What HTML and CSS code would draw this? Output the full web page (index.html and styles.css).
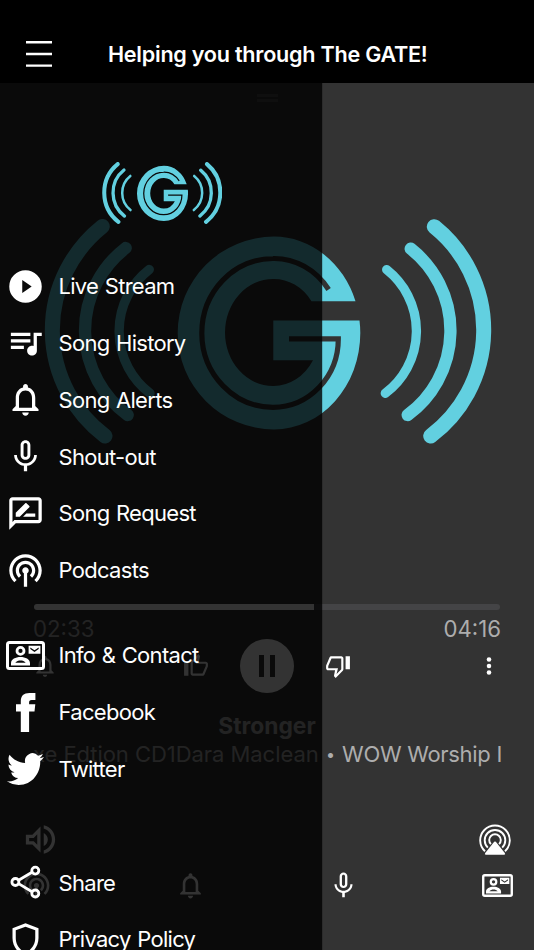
FILE: index.html
```html
<!DOCTYPE html>
<html lang="en">
<head>
<meta charset="utf-8">
<title>The GATE</title>
<link rel="stylesheet" href="styles.css">
</head>
<body>
<svg class="defs" aria-hidden="true">
  <symbol id="bell" viewBox="0 0 24 24"><path d="M12 22c1.1 0 2-.9 2-2h-4c0 1.1.9 2 2 2zm6-6v-5c0-3.07-1.63-5.64-4.5-6.32V4c0-.83-.67-1.5-1.5-1.5s-1.5.67-1.5 1.5v.68C7.64 5.36 6 7.92 6 11v5l-2 2v1h16v-1l-2-2zm-2 1H8v-6c0-2.48 1.51-4.5 4-4.5s4 2.02 4 4.5v6z"/></symbol>
  <symbol id="mic" viewBox="0 0 24 24"><path d="M12 14c1.66 0 2.99-1.34 2.99-3L15 5c0-1.66-1.34-3-3-3S9 3.34 9 5v6c0 1.66 1.34 3 3 3zm-1.2-9.1c0-.66.54-1.2 1.2-1.2.66 0 1.2.54 1.2 1.2l-.01 6.2c0 .66-.53 1.2-1.19 1.2-.66 0-1.2-.54-1.2-1.2V4.9zm6.5 6.1c0 3-2.54 5.1-5.3 5.1S6.7 14 6.7 11H5c0 3.41 2.72 6.23 6 6.72V21h2v-3.28c3.28-.48 6-3.3 6-6.72h-1.7z"/></symbol>
  <symbol id="podcast" viewBox="0 0 24 24"><path d="M14 12c0 .74-.4 1.38-1 1.72V22h-2v-8.28c-.6-.35-1-.98-1-1.72 0-1.1.9-2 2-2s2 .9 2 2zm-2-6c-3.31 0-6 2.69-6 6 0 1.74.75 3.31 1.94 4.4l1.42-1.42C8.53 14.25 8 13.19 8 12c0-2.21 1.79-4 4-4s4 1.79 4 4c0 1.19-.53 2.25-1.36 2.98l1.42 1.42C17.25 15.31 18 13.74 18 12c0-3.31-2.69-6-6-6zm0-4C6.48 2 2 6.48 2 12c0 2.85 1.2 5.41 3.11 7.24l1.42-1.42C4.98 16.36 4 14.29 4 12c0-4.41 3.59-8 8-8s8 3.59 8 8c0 2.29-.98 4.36-2.53 5.82l1.42 1.42C20.8 17.41 22 14.85 22 12c0-5.52-4.48-10-10-10z"/></symbol>
  <symbol id="contact" viewBox="0 0 39 29"><rect x="1.5" y="1.5" width="36" height="26" rx="2" fill="none" stroke="currentColor" stroke-width="3"/><circle cx="14.5" cy="9.9" r="3.5" fill="none" stroke="currentColor" stroke-width="2.8"/><path fill-rule="evenodd" d="M5 24.6v-2.4c0-4 4.6-6.2 9.5-6.2s9.5 2.2 9.5 6.2v2.4zM9.3 21.7h10.4c-1.2-1.7-3.2-2.3-5.2-2.3s-4 .6-5.2 2.3z"/><path fill-rule="evenodd" d="M22.6 4.7h11.8v8h-11.8zM24.3 6.5v1.6l4.2 2.9 4.2-2.9V6.5l-4.2 2.8z"/></symbol>
  <symbol id="thumb" viewBox="0 0 24 24"><path d="M15 3H6c-.83 0-1.54.5-1.84 1.22l-3.02 7.05c-.09.23-.14.47-.14.73v2c0 1.1.9 2 2 2h6.31l-.95 4.57-.03.32c0 .41.17.79.44 1.06L9.83 23l6.59-6.59c.36-.36.58-.86.58-1.41V5c0-1.1-.9-2-2-2zm0 12l-4.34 4.34L12 14H3v-2l3-7h9v10zm4-12h4v12h-4z"/></symbol>
  <symbol id="logo" viewBox="44 219 448 225" preserveAspectRatio="none">
    <g fill="none" stroke="#62d0e0" stroke-linecap="round">
      <path stroke-width="15" d="M434.3 226.7A132.6 132.6 0 0 1 430.7 436M102.3 226.5A132.6 132.6 0 0 0 105 436"/>
      <path stroke-width="12.3" d="M410.7 248.7A104.5 104.5 0 0 1 407.7 415M125.7 248A104.5 104.5 0 0 0 127.7 415"/>
      <path stroke-width="9.3" d="M386.7 269.7A78 78 0 0 1 385.3 393.3M149.3 269.5A78 78 0 0 0 150 393.3"/>
    </g>
    <g class="letter">
      <path fill="#62d0e0" d="M355.5 301.3A86.3 96.4 0 0 0 274 236.6A96.3 96.4 0 0 0 177.7 333A96.3 96.4 0 0 0 274 429.4A86.3 96.4 0 0 0 360.3 333Q360.3 327 359.5 320.5H273.3V360.3H313A46 53.5 0 0 1 273 386A48 53.5 0 0 1 225 332.5A48 53.5 0 0 1 273 279A46 53.5 0 0 1 311.5 301.3Z"/>
      <path class="groove" fill="none" stroke="currentColor" d="M328.6 289.5A67 75 0 0 0 273 258.5A71.2 74.8 0 0 0 201.8 333.3A71.2 74.4 0 0 0 273 407.3A65.3 68.4 0 0 0 338.3 338.9H289"/>
    </g>
  </symbol>
</svg>
<header class="topbar">
  <svg class="burger" viewBox="0 0 26 28"><path d="M0 2.3h26M0 14h26M0 25.6h26" stroke="#fff" stroke-width="2.4"/></svg>
  <h1>Helping you through The GATE!</h1>
</header>
<main class="player">
  <div class="handle"></div>
  <svg class="art"><use href="#logo"/></svg>
  <div class="progress"><div class="progress-fill"></div></div>
  <div class="times"><span>02:33</span><span>04:16</span></div>
  <div class="controls">
    <svg class="sm"><use href="#bell"/></svg>
    <div class="center-controls">
      <svg class="sm flip"><use href="#thumb"/></svg>
      <div class="pause"><i></i><i></i></div>
      <svg class="sm"><use href="#thumb"/></svg>
    </div>
    <svg class="sm" viewBox="0 0 24 24"><circle cx="12" cy="6" r="2.1"/><circle cx="12" cy="12" r="2.1"/><circle cx="12" cy="18" r="2.1"/></svg>
  </div>
  <div class="track">Stronger</div>
  <div class="ticker"><span class="artist">xe Edtion CD1Dara Maclean</span><span class="dot">•</span><span class="album">WOW Worship I</span></div>
  <div class="audio">
    <svg class="lg" viewBox="0 0 24 24"><path d="M3 9v6h4l5 5V4L7 9H3zm7-.17v6.34L7.83 13H5v-2h2.83L10 8.83zM16.5 12c0-1.77-1.02-3.29-2.5-4.03v8.05c1.48-.73 2.5-2.25 2.5-4.02zM14 3.23v2.06c2.89.86 5 3.54 5 6.71s-2.11 5.85-5 6.71v2.06c4.01-.91 7-4.49 7-8.77 0-4.28-2.99-7.86-7-8.77z"/></svg>
    <svg class="airplay" viewBox="0 0 32 32"><g fill="none" stroke="#fff" stroke-width="1.9"><path d="M6 27.2A14.8 14.8 0 1 1 26 27.2"/><path d="M8.8 23.6A10.3 10.3 0 1 1 23.2 23.6"/><path d="M11.9 20.2A5.8 5.8 0 1 1 20.1 20.2"/></g><path d="M15.2 17.8q.8-.8 1.6 0l9 11.3q.9 1.6-.6 1.6H6.8q-1.5 0-.6-1.6z"/></svg>
  </div>
  <nav class="tabs">
    <svg class="md"><use href="#podcast"/></svg>
    <svg class="md"><use href="#bell"/></svg>
    <svg class="md"><use href="#mic"/></svg>
    <svg class="card"><use href="#contact"/></svg>
  </nav>
</main>
<aside class="drawer">
  <svg class="brand"><use href="#logo"/></svg>
  <ul>
    <li><span><svg class="lg" viewBox="0 0 24 24"><path fill-rule="evenodd" d="M12 2a10 10 0 1 0 0 20a10 10 0 1 0 0-20zM10 8v8l5.8-4z"/></svg></span>Live Stream</li>
    <li><span><svg class="lg" viewBox="0 0 24 24"><path d="M15 6H3v2h12V6zm0 4H3v2h12v-2zM3 16h8v-2H3v2zM17 6v8.18c-.31-.11-.65-.18-1-.18-1.66 0-3 1.34-3 3s1.34 3 3 3 3-1.34 3-3V8h3V6h-5z"/></svg></span>Song History</li>
    <li><span><svg class="lg"><use href="#bell"/></svg></span>Song Alerts</li>
    <li><span><svg class="lg"><use href="#mic"/></svg></span>Shout-out</li>
    <li><span><svg class="lg" viewBox="0 0 24 24"><path d="M20 2H4c-1.1 0-2 .9-2 2v18l4-4h14c1.1 0 2-.9 2-2V4c0-1.1-.9-2-2-2zm0 14H5.17L4 17.17V4h16v12zM6 14v-2.47l5.88-5.88c.2-.2.51-.2.71 0l1.77 1.77c.2.2.2.51 0 .71L8.47 14H6zM18 14h-7.5l2-2H18v2z"/></svg></span>Song Request</li>
    <li><span><svg class="lg"><use href="#podcast"/></svg></span>Podcasts</li>
    <li class="gap-half"><span><svg class="contact"><use href="#contact"/></svg></span>Info &amp; Contact</li>
    <li><span><svg class="fb" viewBox="0 0 20 39"><path d="M4.8 39V18.5H0V11.2H4.8V8.5C4.8 2.7 7.7 0 13.5 0H19.4V7H15.7C13.6 7 13.1 8 13.1 9.7V11.2H19.3L18.5 18.5H13.1V39Z"/></svg></span>Facebook</li>
    <li><span><svg class="tw" viewBox="0 2.1 24 19.7" preserveAspectRatio="none"><path d="M23.953 4.57a10 10 0 01-2.825.775 4.958 4.958 0 002.163-2.723c-.951.555-2.005.959-3.127 1.184a4.92 4.92 0 00-8.384 4.482C7.69 8.095 4.067 6.13 1.64 3.162a4.822 4.822 0 00-.666 2.475c0 1.71.87 3.213 2.188 4.096a4.904 4.904 0 01-2.228-.616v.06a4.923 4.923 0 003.946 4.827 4.996 4.996 0 01-2.212.085 4.936 4.936 0 004.604 3.417 9.867 9.867 0 01-6.102 2.105c-.39 0-.779-.023-1.17-.067a13.995 13.995 0 007.557 2.209c9.053 0 13.998-7.496 13.998-13.985 0-.21 0-.42-.015-.63A9.935 9.935 0 0024 4.59z"/></svg></span>Twitter</li>
    <li class="gap-full"><span><svg class="lg" viewBox="0 0 39 39"><g fill="none" stroke="#fff" stroke-width="2.8"><path d="M12.6 17.2L26 9.3M12.6 20.6L26 28.8"/><circle cx="9.4" cy="19" r="3.5"/><circle cx="29.3" cy="7.6" r="3.5"/><circle cx="29.3" cy="30.5" r="3.5"/></g></svg></span>Share</li>
    <li><span><svg class="lg" viewBox="0 0 24 24"><path d="M12 2 4 5v6.09c0 5.05 3.41 9.76 8 10.91 4.59-1.15 8-5.86 8-10.91V5l-8-3zm6 9.09c0 4-2.55 7.7-6 8.83-3.45-1.13-6-4.82-6-8.83V6.31l6-2.12 6 2.12v4.78z"/></svg></span>Privacy Policy</li>
  </ul>
</aside>
</body>
</html>
```
FILE: styles.css
```css
* { box-sizing: border-box; }
body {
  margin: 0;
  width: 534px;
  height: 950px;
  overflow: hidden;
  position: relative;
  background: #333;
  color: #fff;
  font-family: Inter, "Liberation Sans", sans-serif;
}
svg { display: block; flex: none; fill: currentColor; }
.defs { position: absolute; width: 0; height: 0; }
.sm { width: 26px; height: 26px; }
.md { width: 31px; height: 31px; }
.lg { width: 39px; height: 39px; }
.letter { transform: scale(var(--letter-scale, 1)); transform-origin: 269px 333px; }
.groove { stroke-width: var(--groove, 5.2px); }

.topbar {
  height: 83px;
  background: #000;
  display: flex;
  align-items: flex-start;
  padding: 40px 0 0 26px;
}
.burger { width: 26px; height: 28px; }
.topbar h1 {
  margin: 0 0 0 56px;
  font-size: 21.6px;
  line-height: 29px;
  font-weight: 600;
  white-space: nowrap;
  letter-spacing: -0.25px;
}

.player { height: 867px; display: flex; flex-direction: column; }
.handle {
  width: 21px;
  height: 8px;
  margin: 11px auto 0;
  border: solid #4c4c4c;
  border-width: 3px 0;
}
.art { width: 448px; height: 225px; margin: 117px 0 0 44px; color: #333; }
.progress {
  height: 6px;
  margin: 160px 34px 0;
  border-radius: 3px;
  background: #444446;
}
.progress-fill { width: 60%; height: 100%; border-radius: 3px 0 0 3px; background: #fff; }
.times {
  height: 29px;
  margin: 0 33px;
  display: flex;
  justify-content: space-between;
  font-size: 22.2px;
  line-height: 37px;
  color: #adadad;
}
.controls {
  height: 54px;
  padding: 0 32px;
  display: flex;
  align-items: center;
  justify-content: space-between;
}
.center-controls { display: flex; align-items: center; gap: 31px; }
.flip { transform: rotate(180deg); }
.pause {
  width: 54px;
  height: 54px;
  border-radius: 50%;
  background: #fff;
  display: flex;
  align-items: center;
  justify-content: center;
  gap: 6px;
}
.pause i { width: 5px; height: 22px; background: #333; }
.track {
  margin-top: 19px;
  text-align: center;
  font-size: 22.8px;
  line-height: 28px;
  font-weight: 700;
  color: #adadad;
}
.ticker {
  display: flex;
  margin: 0 29px 0 33px;
  font-size: 22px;
  line-height: 28px;
  white-space: nowrap;
  color: #adadad;
}
.artist { flex: none; width: 293px; letter-spacing: -0.05px; }
.dot { flex: none; width: 16px; font-size: 16px; }
.album { letter-spacing: -0.3px; }
.audio {
  height: 39px;
  margin-top: 52px;
  padding: 0 23px 0 21px;
  display: flex;
  align-items: center;
  justify-content: space-between;
}
.airplay { width: 32px; height: 32px; }
.tabs {
  height: 31px;
  margin-top: 11px;
  padding: 0 21px;
  display: flex;
  align-items: center;
  justify-content: space-between;
}
.card { width: 31px; height: 23px; }

.drawer {
  position: absolute;
  left: 0;
  top: 83px;
  width: 323px;
  height: 867px;
  overflow: hidden;
  background: rgba(0, 0, 0, 0.8);
  border-right: 1px solid rgba(0, 0, 0, 0.15);
  background-clip: padding-box;
}
.brand {
  width: 120.5px;
  height: 62px;
  margin: 79px 0 0 101.5px;
  color: #0a0a0a;
  --letter-scale: 1.04;
  --groove: 4.4px;
}
.drawer ul { list-style: none; margin: 33.8px 0 0; padding: 0; }
.drawer li {
  height: 56.8px;
  display: flex;
  align-items: center;
  font-size: 22px;
  letter-spacing: -0.7px;
  word-spacing: 1px;
  white-space: nowrap;
}
.drawer li span { width: 51px; margin-right: 7.5px; display: flex; justify-content: center; flex: none; }
.drawer .gap-half { margin-top: 28.4px; }
.drawer .gap-full { margin-top: 56.8px; }
.contact { width: 39px; height: 29px; }
.fb { width: 20px; height: 39px; }
.tw { width: 37px; height: 32px; }
```
